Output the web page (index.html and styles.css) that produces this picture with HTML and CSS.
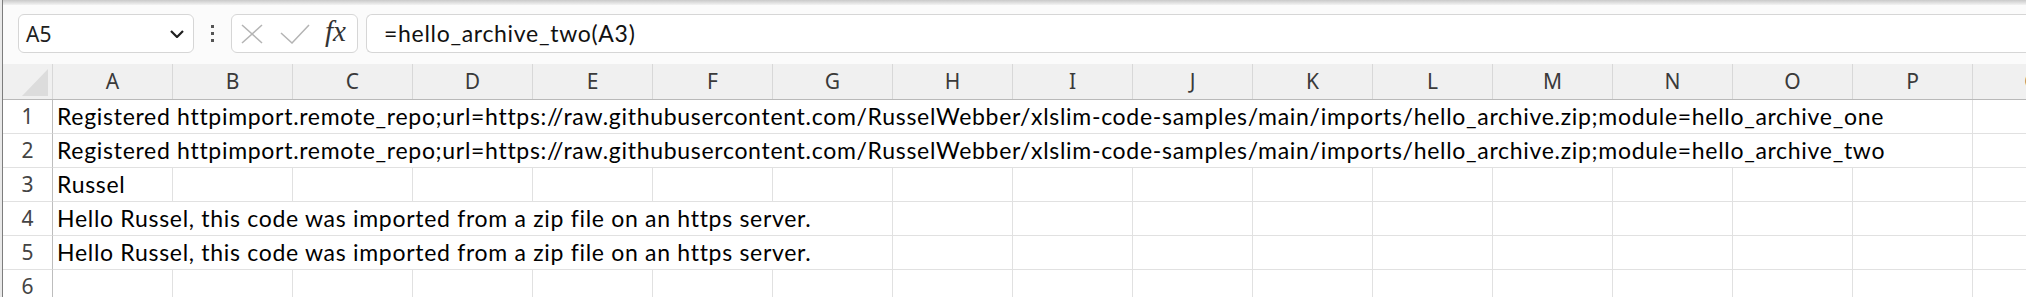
FILE: index.html
```html
<!DOCTYPE html>
<html lang="en">
<head>
  <meta charset="UTF-8" />
  <title>Book1 - Excel</title>
  <link rel="stylesheet" href="styles.css">
</head>
<body>
  <div class="app">
    <div class="ribbon-shadow"></div>

    <!-- Formula bar -->
    <div class="formula-bar">
      <div class="name-box">
        <span>A5</span>
        <svg class="chevron" width="14" height="8" viewBox="0 0 14 8"><polyline points="1,1 7,7 13,1" /></svg>
      </div>
      <div class="grip"><i></i><i></i><i></i></div>
      <div class="fx-box">
        <svg class="cancel" width="22" height="20" viewBox="0 0 22 20"><line x1="1" y1="1" x2="21" y2="19" /><line x1="21" y1="1" x2="1" y2="19" /></svg>
        <svg class="enter" width="30" height="20" viewBox="0 0 30 20"><polyline points="1,9 12,19 29,1" /></svg>
        <span class="fx">fx</span>
      </div>
      <div class="formula-input">=hello_archive_two(A3)</div>
    </div>

    <!-- Sheet grid -->
    <div class="sheet">
      <div class="row head">
        <div class="corner"><svg width="26" height="27" viewBox="0 0 26 27"><polygon points="26,0 26,27 0,27" /></svg></div>
        <div class="col">A</div><div class="col">B</div><div class="col">C</div><div class="col">D</div>
        <div class="col">E</div><div class="col">F</div><div class="col">G</div><div class="col">H</div>
        <div class="col">I</div><div class="col">J</div><div class="col">K</div><div class="col">L</div>
        <div class="col">M</div><div class="col">N</div><div class="col">O</div><div class="col">P</div>
        <div class="col">Q</div>
      </div>

      <div class="row">
        <div class="num">1</div>
        <div class="cell span-16">Registered httpimport.remote_repo;url=https://raw.githubusercontent.com/RusselWebber/xlslim-code-samples/main/imports/hello_archive.zip;module=hello_archive_one</div>
        <div class="cell"></div>
      </div>
      <div class="row">
        <div class="num">2</div>
        <div class="cell span-16">Registered httpimport.remote_repo;url=https://raw.githubusercontent.com/RusselWebber/xlslim-code-samples/main/imports/hello_archive.zip;module=hello_archive_two</div>
        <div class="cell"></div>
      </div>
      <div class="row">
        <div class="num">3</div>
        <div class="cell">Russel</div>
        <div class="cell"></div><div class="cell"></div><div class="cell"></div><div class="cell"></div>
        <div class="cell"></div><div class="cell"></div><div class="cell"></div><div class="cell"></div>
        <div class="cell"></div><div class="cell"></div><div class="cell"></div><div class="cell"></div>
        <div class="cell"></div><div class="cell"></div><div class="cell"></div><div class="cell"></div>
      </div>
      <div class="row">
        <div class="num">4</div>
        <div class="cell span-7">Hello Russel, this code was imported from a zip file on an https server.</div>
        <div class="cell"></div><div class="cell"></div><div class="cell"></div><div class="cell"></div>
        <div class="cell"></div><div class="cell"></div><div class="cell"></div><div class="cell"></div>
        <div class="cell"></div><div class="cell"></div>
      </div>
      <div class="row">
        <div class="num">5</div>
        <div class="cell span-7">Hello Russel, this code was imported from a zip file on an https server.</div>
        <div class="cell"></div><div class="cell"></div><div class="cell"></div><div class="cell"></div>
        <div class="cell"></div><div class="cell"></div><div class="cell"></div><div class="cell"></div>
        <div class="cell"></div><div class="cell"></div>
      </div>
      <div class="row">
        <div class="num">6</div>
        <div class="cell"></div><div class="cell"></div><div class="cell"></div><div class="cell"></div>
        <div class="cell"></div><div class="cell"></div><div class="cell"></div><div class="cell"></div>
        <div class="cell"></div><div class="cell"></div><div class="cell"></div><div class="cell"></div>
        <div class="cell"></div><div class="cell"></div><div class="cell"></div><div class="cell"></div>
        <div class="cell"></div>
      </div>
    </div>
  </div>
</body>
</html>
```

FILE: styles.css
```css
/* Excel-like sheet, light theme */
body {
  margin: 0;
  padding-left: 2px;
  background: #e9e9e9;
  font-family: 'Noto Sans', sans-serif;
  color: #222;
  height: 297px;
  overflow: hidden;
}
.app {
  background: #fff;
  border-left: 1px solid #7d7d7d;
  height: 297px;
  overflow: hidden;
}
.ribbon-shadow {
  height: 5px;
  background: linear-gradient(#c9c9c9, #f3f3f3);
}

/* Formula bar */
.formula-bar {
  display: flex;
  align-items: flex-start;
  height: 59px;
  padding: 9px 0 0 15px;
  box-sizing: border-box;
  background: #fbfbfb;
}
.name-box, .fx-box, .formula-input {
  flex-shrink: 0;
  height: 39px;
  box-sizing: border-box;
  background: #fff;
  border: 1px solid #d6d6d6;
  border-radius: 6px;
}
.name-box {
  width: 176px;
  display: flex;
  align-items: center;
  justify-content: space-between;
  padding: 0 9px 0 7px;
  font-size: 21px;
  color: #1f1f1f;
}
.chevron polyline {
  fill: none;
  stroke: #1f1f1f;
  stroke-width: 2.2;
}
.grip {
  flex-shrink: 0;
  display: flex;
  flex-direction: column;
  justify-content: center;
  gap: 4px;
  height: 39px;
  margin: 0 17px;
}
.grip i {
  display: block;
  width: 3px;
  height: 3px;
  background: #555;
}
.fx-box {
  width: 127px;
  margin-right: 8px;
  display: flex;
  align-items: center;
  padding-left: 9px;
}
.fx-box line, .fx-box polyline {
  fill: none;
  stroke: #b4b4b4;
  stroke-width: 1.5;
}
.enter {
  margin-left: 17px;
}
.fx {
  margin-left: 15px;
  font-family: 'Liberation Serif', serif;
  font-style: italic;
  font-size: 29px;
  color: #333;
  line-height: 1;
  margin-top: -4px;
}
.formula-input {
  width: 1700px;
  border-right: none;
  border-radius: 6px 0 0 6px;
  padding-left: 17px;
  font-family: 'Lato', sans-serif;
  font-size: 23px;
  letter-spacing: 0.7px;
  line-height: 37px;
  color: #111;
}

/* Grid */
.sheet {
  width: 2090px;
}
.row {
  display: grid;
  grid-template-columns: 50px repeat(17, 120px);
  height: 34px;
}
.row.head {
  height: 36px;
  background: #f0f0f0;
  border-bottom: 1px solid #b9b9b9;
  box-sizing: border-box;
}
.corner {
  display: flex;
  justify-content: flex-end;
  align-items: flex-end;
  padding: 0 4px 3px 0;
  border-right: 1px solid #d8d8d8;
}
.corner polygon {
  fill: #dcdcdc;
}
.col {
  border-right: 1px solid #d8d8d8;
  text-align: center;
  font-size: 21px;
  line-height: 35px;
  color: #3a3a3a;
}
.num {
  border-right: 1px solid #bdbdbd;
  border-bottom: 1px solid #e1e1e1;
  text-align: center;
  font-size: 21px;
  line-height: 33px;
  color: #444;
}
.cell {
  border-right: 1px solid #e1e1e1;
  border-bottom: 1px solid #e1e1e1;
  padding-left: 4px;
  font-family: 'Lato', sans-serif;
  font-size: 23px;
  letter-spacing: 0.7px;
  line-height: 33px;
  color: #000;
  white-space: nowrap;
}
.span-16 {
  grid-column: span 16;
}
.span-7 {
  grid-column: span 7;
}
```
